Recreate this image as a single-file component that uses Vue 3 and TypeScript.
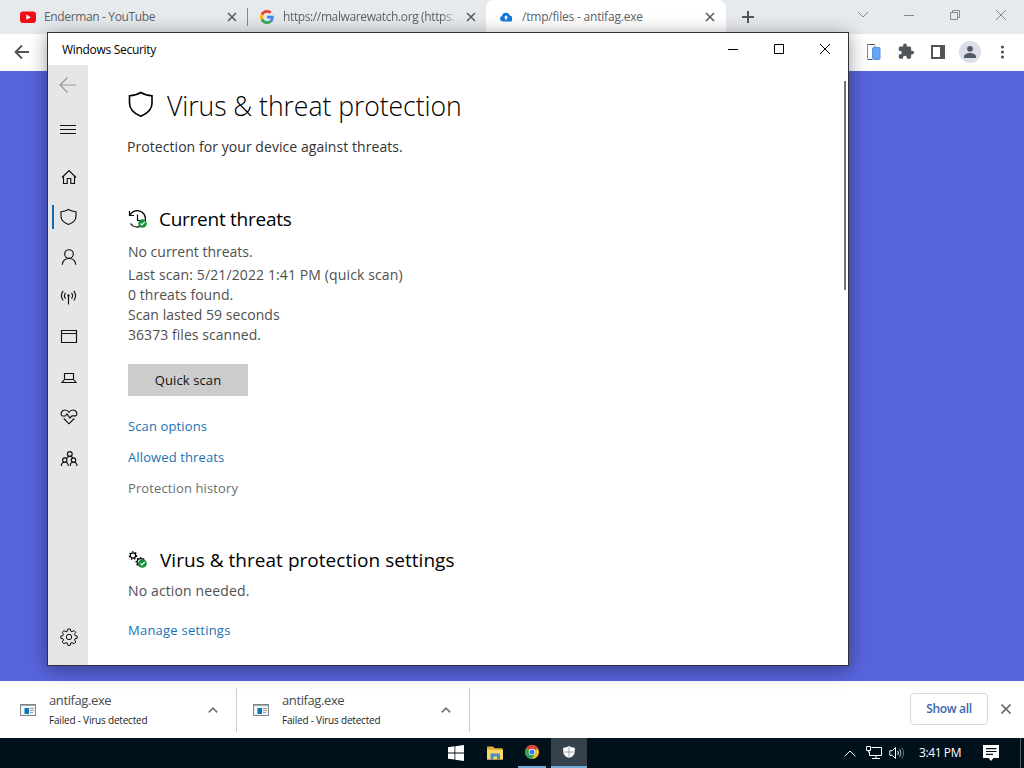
<script setup lang="ts">
interface Download {
  name: string
  status: string
}

const downloads: Download[] = [
  { name: 'antifag.exe', status: 'Failed - Virus detected' },
  { name: 'antifag.exe', status: 'Failed - Virus detected' },
]

const scanDetails: string[] = [
  'Last scan: 5/21/2022 1:41 PM (quick scan)',
  '0 threats found.',
  'Scan lasted 59 seconds',
  '36373 files scanned.',
]
</script>

<template>
  <div class="desktop">
    <div class="tabstrip">
      <div class="tab first">
        <svg width="16" height="16" viewBox="0 0 16 16">
          <rect x="0" y="2.500" width="16" height="11.500" rx="3" class="yt" />
          <path d="M6.300 5.600 10.800 8.200l-4.500 2.600z" class="white" />
        </svg>
        <span class="tab-title">Enderman - YouTube</span>
        <svg class="tab-x" width="10" height="10" viewBox="0 0 10 10"><path d="M1 1l8 8M9 1l-8 8" /></svg>
      </div>
      <div class="tab second">
        <svg width="14" height="14" viewBox="0 0 48 48">
          <path fill="#EA4335" d="M24 9.5c3.54 0 6.71 1.22 9.21 3.6l6.85-6.85C35.9 2.38 30.47 0 24 0 14.62 0 6.51 5.38 2.56 13.22l7.98 6.19C12.43 13.72 17.74 9.5 24 9.5z" />
          <path fill="#4285F4" d="M46.98 24.55c0-1.57-.15-3.09-.38-4.55H24v9.02h12.94c-.58 2.96-2.26 5.48-4.78 7.18l7.73 6c4.51-4.18 7.09-10.36 7.09-17.65z" />
          <path fill="#FBBC05" d="M10.53 28.59c-.48-1.45-.76-2.99-.76-4.59s.27-3.14.76-4.59l-7.98-6.19C.92 16.46 0 20.12 0 24c0 3.88.92 7.54 2.56 10.78l7.97-6.19z" />
          <path fill="#34A853" d="M24 48c6.48 0 11.93-2.13 15.89-5.81l-7.73-6c-2.15 1.45-4.92 2.3-8.16 2.3-6.26 0-11.57-4.22-13.47-9.91l-7.98 6.19C6.51 42.62 14.62 48 24 48z" />
        </svg>
        <span class="tab-title clipped">https://malwarewatch.org (https:</span>
        <svg class="tab-x" width="10" height="10" viewBox="0 0 10 10"><path d="M1 1l8 8M9 1l-8 8" /></svg>
      </div>
      <div class="tab active">
        <svg width="12" height="10" viewBox="0 0 12 10">
          <path d="M3 9.6A2.9 2.9 0 0 1 1.900 4 4.200 4.200 0 0 1 10 3.800 2.900 2.900 0 0 1 9.300 9.600z" fill="#1578dc" />
          <path d="M6 3.200 8.200 5.800H6.800v2H5.200v-2H3.800z" class="white" />
        </svg>
        <span class="tab-title">/tmp/files - antifag.exe</span>
        <svg class="tab-x" width="10" height="10" viewBox="0 0 10 10"><path d="M1 1l8 8M9 1l-8 8" /></svg>
      </div>
      <svg class="new-tab" width="12" height="12" viewBox="0 0 12 12"><path d="M6 0v12M0 6h12" /></svg>
      <div class="browser-controls">
        <svg width="12" height="12" viewBox="0 0 12 12"><path d="M1 3l5 5 5-5" /></svg>
        <svg width="12" height="12" viewBox="0 0 12 12"><path d="M1 6.500h10" /></svg>
        <svg width="12" height="12" viewBox="0 0 12 12"><path d="M1.500 3.500h7v7h-7zM3.500 3.500v-2h7v7h-2" /></svg>
        <svg width="12" height="12" viewBox="0 0 12 12"><path d="M1 1l10 10M11 1L1 11" /></svg>
      </div>
    </div>

    <div class="toolbar">
      <svg class="nav-back" width="16" height="16" viewBox="0 0 16 16"><path d="M15 8H2M8 1.500L1.500 8 8 14.500" /></svg>
      <div class="toolbar-icons">
        <svg width="20" height="20" viewBox="0 0 20 20">
          <path d="M3.500 16.500v-13q0-1 1-1H10l1 1V6" fill="#fff" stroke="#7b8696" />
          <path d="M3.500 2.500H10.500M3.500 17.500H8" stroke="#4a5666" />
          <rect x="8.500" y="5.500" width="7.500" height="12" rx="1" fill="#66a5f5" stroke="#5a90dc" />
        </svg>
        <svg width="20" height="20" viewBox="0 0 24 24">
          <path fill="#50555a" d="M20.500 11H19V7c0-1.100-.9-2-2-2h-4V3.500a2.500 2.500 0 0 0-5 0V5H4c-1.100 0-2 .9-2 2v3.800h1.500a2.700 2.700 0 0 1 0 5.400H2V20c0 1.100.9 2 2 2h3.800v-1.500a2.700 2.700 0 0 1 5.400 0V22H17c1.100 0 2-.9 2-2v-4h1.500a2.500 2.500 0 0 0 0-5z" transform="translate(1.600 1) scale(.87)" />
        </svg>
        <svg width="20" height="20" viewBox="0 0 20 20">
          <rect x="4" y="4" width="12" height="12" fill="none" stroke="#50555a" stroke-width="2" />
          <rect x="12" y="3" width="5" height="14" fill="#50555a" />
        </svg>
        <svg width="22" height="22" viewBox="0 0 22 22">
          <circle cx="11" cy="11" r="11" fill="#dcdfe7" />
          <circle cx="11" cy="7.800" r="2.900" fill="#505a66" />
          <path d="M5 17v-1.500c0-2.200 3.500-3.500 6-3.500s6 1.300 6 3.500V17z" fill="#505a66" />
        </svg>
        <svg width="20" height="20" viewBox="0 0 20 20">
          <g fill="#50555a"><circle cx="10.500" cy="5" r="1.600" /><circle cx="10.500" cy="10" r="1.600" /><circle cx="10.500" cy="15" r="1.600" /></g>
        </svg>
      </div>
    </div>

    <main class="page"></main>

    <div class="downloads">
      <div v-for="(d, i) in downloads" :key="i" class="download">
        <svg width="16" height="12" viewBox="0 0 16 12">
          <rect x=".5" y=".5" width="15" height="11" fill="#f2f5f6" stroke="#7f878d" />
          <path d="M0 1h16" stroke="#7f878d" stroke-width="1.400" />
          <rect x="4.500" y="4" width="4.500" height="6" fill="#0b78ba" />
          <path d="M10 4.500h4M10 6.500h4M10 8.500h3" stroke="#8d969c" stroke-width=".9" />
        </svg>
        <div class="download-text">
          <span class="download-name">{{ d.name }}</span>
          <span class="download-status">{{ d.status }}</span>
        </div>
        <svg class="chev" width="10" height="6" viewBox="0 0 10 6"><path d="M.8 5.400L5 1.200l4.200 4.200" /></svg>
      </div>
      <button class="show-all" type="button">Show all</button>
      <svg class="close-bar" width="10" height="10" viewBox="0 0 10 10"><path d="M.5.5l9 9M9.500.5l-9 9" /></svg>
    </div>

    <div class="taskbar">
      <div class="task-apps">
        <div class="task">
          <svg width="16" height="16" viewBox="0 0 16 16">
            <path class="white" d="M0 2.200 6.500 1.300V7.500H0zM7.300 1.200 16 0v7.500H7.300zM0 8.400h6.500v6.200L0 13.700zM7.300 8.400H16V16l-8.700-1.200z" />
          </svg>
        </div>
        <div class="task">
          <svg width="18" height="16" viewBox="0 0 18 16">
            <path d="M1 1.500h6l1.500 1.700H16.500V14.500H1z" fill="#e5ac31" />
            <path d="M1 4.800h16V14.500H1z" fill="#fbd763" />
            <path d="M4.500 14.500V8.500h9.500v6h-3V11.500H7.500v3z" fill="#438fc3" />
          </svg>
        </div>
        <div class="task running">
          <svg width="14" height="14" viewBox="0 0 14 14">
            <circle cx="7" cy="7" r="7" fill="#f6c326" />
            <path d="M7 7 .94 3.500A7 7 0 0 1 13.060 3.500z" fill="#dd4336" />
            <path d="M7 7 .94 3.500A7 7 0 0 0 7 14l3-5.300z" fill="#2f9d55" />
            <circle cx="7" cy="7" r="3.300" fill="#fff" />
            <circle cx="7" cy="7" r="2.600" fill="#3b7de0" />
          </svg>
        </div>
        <div class="task current">
          <svg width="12" height="12" viewBox="0 0 12 12">
            <path d="M6 0c1.800 1.200 3.600 1.600 5.800 1.700V5.500C11.800 9 9 11 6 12 3 11 .2 9 .2 5.500V1.700C2.400 1.600 4.200 1.200 6 0z" fill="#fff" />
            <path d="M6 1v11M.5 6h11" stroke="#5d6b74" stroke-width=".6" />
          </svg>
        </div>
      </div>
      <div class="tray">
        <svg class="tray-up" width="12" height="7" viewBox="0 0 12 7"><path d="M.6 6.300 6 1l5.400 5.300" /></svg>
        <svg class="tray-net" width="17" height="14" viewBox="0 0 17 14">
          <path d="M5.500 1.500h10v8H3.500V5.500M10 9.500v3M6 12.500h8M.5.5h4v4h-4zM2.500 4.500v2" />
        </svg>
        <svg class="tray-vol" width="16" height="14" viewBox="0 0 16 14">
          <path d="M.8 4.700h2.500L6.500 1.500v11L3.300 9.300H.8zM8.700 5q1.300 2 0 4" />
          <path d="M10.700 3.300q2.500 3.700 0 7.400" opacity=".75" /><path d="M12.800 1.700q3.600 5.300 0 10.600" opacity=".4" />
        </svg>
        <span class="clock">3:41 PM</span>
        <svg class="tray-note" width="16" height="16" viewBox="0 0 16 16">
          <path d="M0 0h16v13H10.500L8 16l-2.500-3H0z" fill="#fff" />
          <path d="M3 3.700h10.500M3 6.500h10.500M3 9.300h7" stroke="#02101b" stroke-width="1.200" />
        </svg>
      </div>
    </div>

    <section class="window">
      <header class="titlebar">
        <span class="window-title">Windows Security</span>
        <div class="window-controls">
          <svg width="12" height="12" viewBox="0 0 12 12"><path d="M1 6.500h10" /></svg>
          <svg width="12" height="12" viewBox="0 0 12 12"><path d="M1.500 1.500h9v9h-9z" /></svg>
          <svg width="12" height="12" viewBox="0 0 12 12"><path d="M1 1l10 10M11 1L1 11" /></svg>
        </div>
      </header>
      <div class="window-body">
        <nav class="sidebar">
          <div class="item back">
            <svg width="18" height="18" viewBox="0 0 18 18"><path d="M17 9H1.500M8.500 1.500 1 9l7.500 7.500" /></svg>
          </div>
          <div class="item burger">
            <svg width="18" height="18" viewBox="0 0 18 18"><path d="M1 5.500h16M1 9.500h16M1 13.500h16" /></svg>
          </div>
          <div class="item">
            <svg width="18" height="18" viewBox="0 0 18 18"><path d="M2 9.500 9 2.500 16 9.500M3.500 8.300v7.200h3.700v-5h3.600v5h3.700V8.300" /></svg>
          </div>
          <div class="item selected">
            <svg width="18" height="18" viewBox="0 0 18 18"><path d="M8.500 1.500C10.800 2.800 13 3.500 16 3.700V8c0 4-3.100 6.900-7.500 8.500C4.100 14.900 1 12 1 8V3.700C4 3.500 6.200 2.800 8.500 1.500z" /></svg>
          </div>
          <div class="item">
            <svg width="18" height="18" viewBox="0 0 18 18"><circle cx="9" cy="6" r="4.300" /><path d="M2.300 16.800c.3-4 3-6.300 6.700-6.300s6.400 2.300 6.700 6.300" /></svg>
          </div>
          <div class="item">
            <svg width="18" height="18" viewBox="0 0 18 18">
              <path d="M8.500 8v8.500M5.500 4.800q-2.200 2.900 0 5.800M11.500 4.800q2.200 2.900 0 5.800M3.200 2.900q-3.600 4.800 0 9.600M13.800 2.900q3.600 4.800 0 9.600" />
              <circle cx="8.500" cy="7.500" r=".6" />
            </svg>
          </div>
          <div class="item">
            <svg width="18" height="18" viewBox="0 0 18 18"><path d="M1.500 2.500v12h15v-12zM1.500 5.500h15" /></svg>
          </div>
          <div class="item">
            <svg width="18" height="18" viewBox="0 0 18 18"><path d="M4.500 11.500v-6h9v6M4.500 11.500h9l2.500 3H2z" /></svg>
          </div>
          <div class="item">
            <svg width="18" height="18" viewBox="0 0 18 18">
              <path d="M1.700 7.800C.3 5 2 2 5 2c2 0 3.200 1 4 2.300C9.800 3 11 2 13 2c3 0 4.700 3 3.300 5.800M3.700 10.500 9 15.800 14.300 10.500" />
              <path d="M1.700 8h3.600l1.700-2 3 4 2-2.200h4.200" />
            </svg>
          </div>
          <div class="item family">
            <svg width="18" height="18" viewBox="0 0 18 18">
              <circle cx="9.800" cy="4" r="2.400" /><circle cx="4.800" cy="10" r="2.200" /><circle cx="13.500" cy="10" r="2.200" />
              <path d="M1.300 16c0-2.500 1.500-3.800 3.500-3.800S8.300 13.500 8.300 16M10.200 16c0-2.500 1.300-3.800 3.300-3.800s3.500 1.300 3.500 3.800M6.300 8.600C6.900 7.200 8 6.400 9.800 6.400s2.600.7 3.200 1.500" />
            </svg>
          </div>
          <div class="item gear">
            <svg width="18" height="18" viewBox="-9 -9 18 18">
              <circle r="2.700" />
              <path d="M-1.300-8h2.600l.5 2.300 1.200.5 2-1.300 1.800 1.800-1.300 2 .5 1.200L8.200-1v2.300L6 1.800l-.5 1.200 1.300 2L5 6.800l-2-1.300-1.200.5-.5 2.300h-2.600L-1.800 6-3 5.500-5 6.800-6.800 5l1.300-2L-6 1.800l-2.200-.5V-1L-6-1.500l.5-1.200-1.300-2L-5-6.500l2 1.300 1.200-.5z" />
            </svg>
          </div>
        </nav>

        <div class="content">
          <h1>
            <svg width="26" height="28" viewBox="0 0 26 28"><path d="M12.800 2.500c3.400 2.200 6.700 3 11.200 3.200v7.500c0 6.200-4.500 10.300-11.200 13C6.100 23.500 1.500 19.400 1.500 13.200V5.700C6 5.500 9.400 4.700 12.800 2.500z" /></svg>
            Virus &amp; threat protection
          </h1>
          <p class="lead">Protection for your device against threats.</p>

          <h2 class="threats">
            <svg width="20" height="20" viewBox="0 0 20 20">
              <path d="M1.500 2v4.500H6M2 6A8.200 8.200 0 1 1 2.500 14.500M9.500 5.500v6h4" />
              <circle cx="14.500" cy="14.500" r="4.300" class="ok" /><path d="M12.500 14.500l1.500 1.500 2.700-3" class="tick" />
            </svg>
            Current threats
          </h2>
          <p class="none">No current threats.</p>
          <p v-for="line in scanDetails" :key="line" class="detail">{{ line }}</p>
          <button class="scan" type="button">Quick scan</button>
          <ul class="links">
            <li><a>Scan options</a></li>
            <li><a>Allowed threats</a></li>
            <li><a class="muted">Protection history</a></li>
          </ul>

          <h2 class="settings">
            <svg width="20" height="20" viewBox="0 0 20 20">
              <circle cx="5" cy="5.500" r="2.700" /><circle cx="5" cy="5.500" r="3.700" class="teeth" />
              <circle cx="12.500" cy="12" r="3.300" /><circle cx="12.500" cy="12" r="4.300" class="teeth" />
              <circle cx="14.500" cy="13.500" r="4.300" class="ok" /><path d="M12.500 13.500l1.500 1.500 2.700-3" class="tick" />
            </svg>
            Virus &amp; threat protection settings
          </h2>
          <p class="none">No action needed.</p>
          <a class="manage">Manage settings</a>
        </div>
        <div class="scrollbar"></div>
      </div>
    </section>
  </div>
</template>

<style>
body { margin: 0; overflow: hidden; }
</style>

<style scoped>
* { box-sizing: border-box; }
.desktop { position: relative; width: 1024px; height: 768px; display: flex; flex-direction: column; overflow: hidden; font-family: "Open Sans", "Noto Sans", sans-serif; color: #000; white-space: nowrap; }
svg { display: block; flex: none; fill: none; }
.white { fill: #fff; }
.yt { fill: #f30b16; }

.tabstrip { height: 34px; background: #e7eaed; display: flex; align-items: center; color: #5e6368; font-size: 12px; }
.tab { height: 34px; display: flex; align-items: center; flex: none; }
.tab-title { flex: 1; line-height: 20px; letter-spacing: -.36px; }
.tab-x { stroke: #565a5e; stroke-width: 1.5; }
.first { width: 248px; padding: 0 11px 0 20px; position: relative; }
.first::after { content: ""; position: absolute; right: 0; top: 8px; width: 1px; height: 18px; background: #85898d; }
.first .tab-title { margin-left: 8px; }
.second { width: 238px; padding: 0 10px 0 12px; }
.second .tab-title { margin: 0 11px 0 9px; letter-spacing: -.38px; }
.clipped { -webkit-mask-image: linear-gradient(90deg, #000 92%, transparent 102%); mask-image: linear-gradient(90deg, #000 92%, transparent 102%); }
.active { width: 240px; padding: 0 11px 0 14px; background: #fff; border-radius: 8px 8px 0 0; }
.active .tab-title { margin-left: 10px; letter-spacing: -.2px; }
.new-tab { margin-left: 16px; stroke: #50555a; stroke-width: 2; }
.browser-controls { margin-left: auto; display: flex; gap: 34px; padding: 0 17px 5px 0; stroke: #85898d; }

.toolbar { height: 37px; background: #fff; display: flex; align-items: center; justify-content: space-between; padding: 0 12px 1px 14px; }
.nav-back { stroke: #50555a; stroke-width: 1.8; }
.toolbar-icons { display: flex; align-items: center; gap: 12px; }
.toolbar-icons svg:nth-child(4) { margin: 0 -1px; }

.page { height: 610px; background: #5864dc; }

.downloads { height: 57px; background: #fff; display: flex; align-items: center; padding-right: 13px; }
.download { width: 233px; height: 44px; display: flex; align-items: center; border-right: 1px solid #c9cbcd; padding: 0 18px 0 16px; }
.download:first-child { width: 237px; padding-left: 20px; }
.download-text { margin: 1px 0 0 13px; flex: 1; display: flex; flex-direction: column; }
.download-name { font-size: 13px; line-height: 19px; letter-spacing: -.4px; color: #4a4a4c; }
.download-status { font-size: 10px; line-height: 20px; letter-spacing: -.2px; color: #222; }
.chev { stroke: #707274; stroke-width: 1.6; }
.show-all { margin: -1px 0 0 auto; width: 78px; height: 32px; border: 1px solid #d6d9dd; border-radius: 4px; background: #fff; color: #3a66ad; font: 600 12px "Open Sans", sans-serif; letter-spacing: -.3px; padding: 0 0 1px; }
.close-bar { margin: -1px 0 0 13px; stroke: #696c70; stroke-width: 1.6; }

.taskbar { height: 30px; background: #01111b; display: flex; justify-content: space-between; padding-left: 438px; }
.task-apps { display: flex; }
.task { width: 36px; height: 30px; display: flex; align-items: center; justify-content: center; margin-right: 3px; }
.task.running { width: 28px; margin: 0 5px 0 2px; border-bottom: 2px solid #73aedb; }
.task.current { background: #35424b; border-bottom: 2px solid #73aedb; margin: 0; }
.tray { display: flex; align-items: center; stroke: #fff; color: #fff; padding-right: 4px; border-right: 1px solid #53606a; margin-right: 3px; }
.tray-up { margin-right: 10px; }
.tray-net { margin-right: 6px; }
.tray-note { stroke: none; margin-right: 17px; }
.clock { font-size: 12px; width: 64px; margin: -1px 0 0 14px; letter-spacing: -.4px; stroke: none; }

.window { position: absolute; left: 47px; top: 32px; width: 802px; height: 634px; border: 1px solid #303139; background: #fff; box-shadow: 0 3px 18px rgba(0, 0, 0, .4); display: flex; flex-direction: column; }
.titlebar { height: 32px; display: flex; justify-content: space-between; align-items: center; padding: 0 17px 0 14px; }
.window-title { font-size: 12px; letter-spacing: -.3px; }
.window-controls { display: flex; gap: 34px; stroke: #000; }
.window-body { flex: 1; display: flex; }
.sidebar { width: 40px; background: #e6e6e6; display: flex; flex-direction: column; padding-bottom: 8px; }
.item { height: 40px; padding-left: 2px; display: flex; align-items: center; justify-content: center; stroke: #111; stroke-width: 1.15; }
.item.back { stroke: #999; padding: 0; }
.item.burger { margin: 4px 0 8px; padding: 0; }
.item.selected { position: relative; }
.item.selected::before { content: ""; position: absolute; left: 4px; top: 8px; width: 2px; height: 24px; background: #0f6cb0; }
.item.family { padding-top: 3px; }
.item.gear { margin-top: auto; stroke-width: 1; }

.content { flex: 1; padding: 17px 0 0 40px; }
h1, h2 { margin: 0; display: flex; align-items: center; font-weight: 400; }
h1 { height: 48px; font-size: 26.6px; font-weight: 350; letter-spacing: -.06px; }
h1 svg { margin: -5px 13px 0 0; stroke: #000; stroke-width: 1.6; }
h2 { height: 30px; font-size: 19px; }
h2 svg { margin-right: 11px; stroke: #000; stroke-width: 1.2; }
.ok { fill: #12933a; stroke: none; }
.tick { stroke: #fff; stroke-width: 1.2; }
.teeth { stroke-dasharray: 1.4 1.8; stroke-width: 1.3; }
p { margin: 0; height: 20px; line-height: 20px; font-size: 14px; color: #4f4f4f; }
.lead { margin: 7px 0 0 -1px; color: #333; letter-spacing: .06px; }
.threats { margin-top: 47px; letter-spacing: -.26px; }
.threats + .none { margin: 8px 0 3px; }
.detail { letter-spacing: .05px; }
.none + .detail { letter-spacing: .12px; }
.scan { display: block; margin-top: 19px; width: 120px; height: 32px; border: 0; padding: 0; background: #ccc; font: 13px "Open Sans", sans-serif; letter-spacing: .1px; color: #111; }
.links { list-style: none; margin: 20px 0 0; padding: 0; display: flex; flex-direction: column; gap: 11px; }
a { display: block; height: 20px; line-height: 20px; font-size: 13px; letter-spacing: .12px; color: #1a72b4; }
a.muted { color: #6d6d6d; }
.settings { margin-top: 47px; letter-spacing: .03px; }
.settings svg { margin-right: 12px; }
.settings + .none { margin-top: 6px; letter-spacing: .13px; }
.manage { margin-top: 19px; letter-spacing: .23px; }
.scrollbar { width: 2px; height: 209px; margin: 16px 2px 0 0; background: #71767a; }
</style>
